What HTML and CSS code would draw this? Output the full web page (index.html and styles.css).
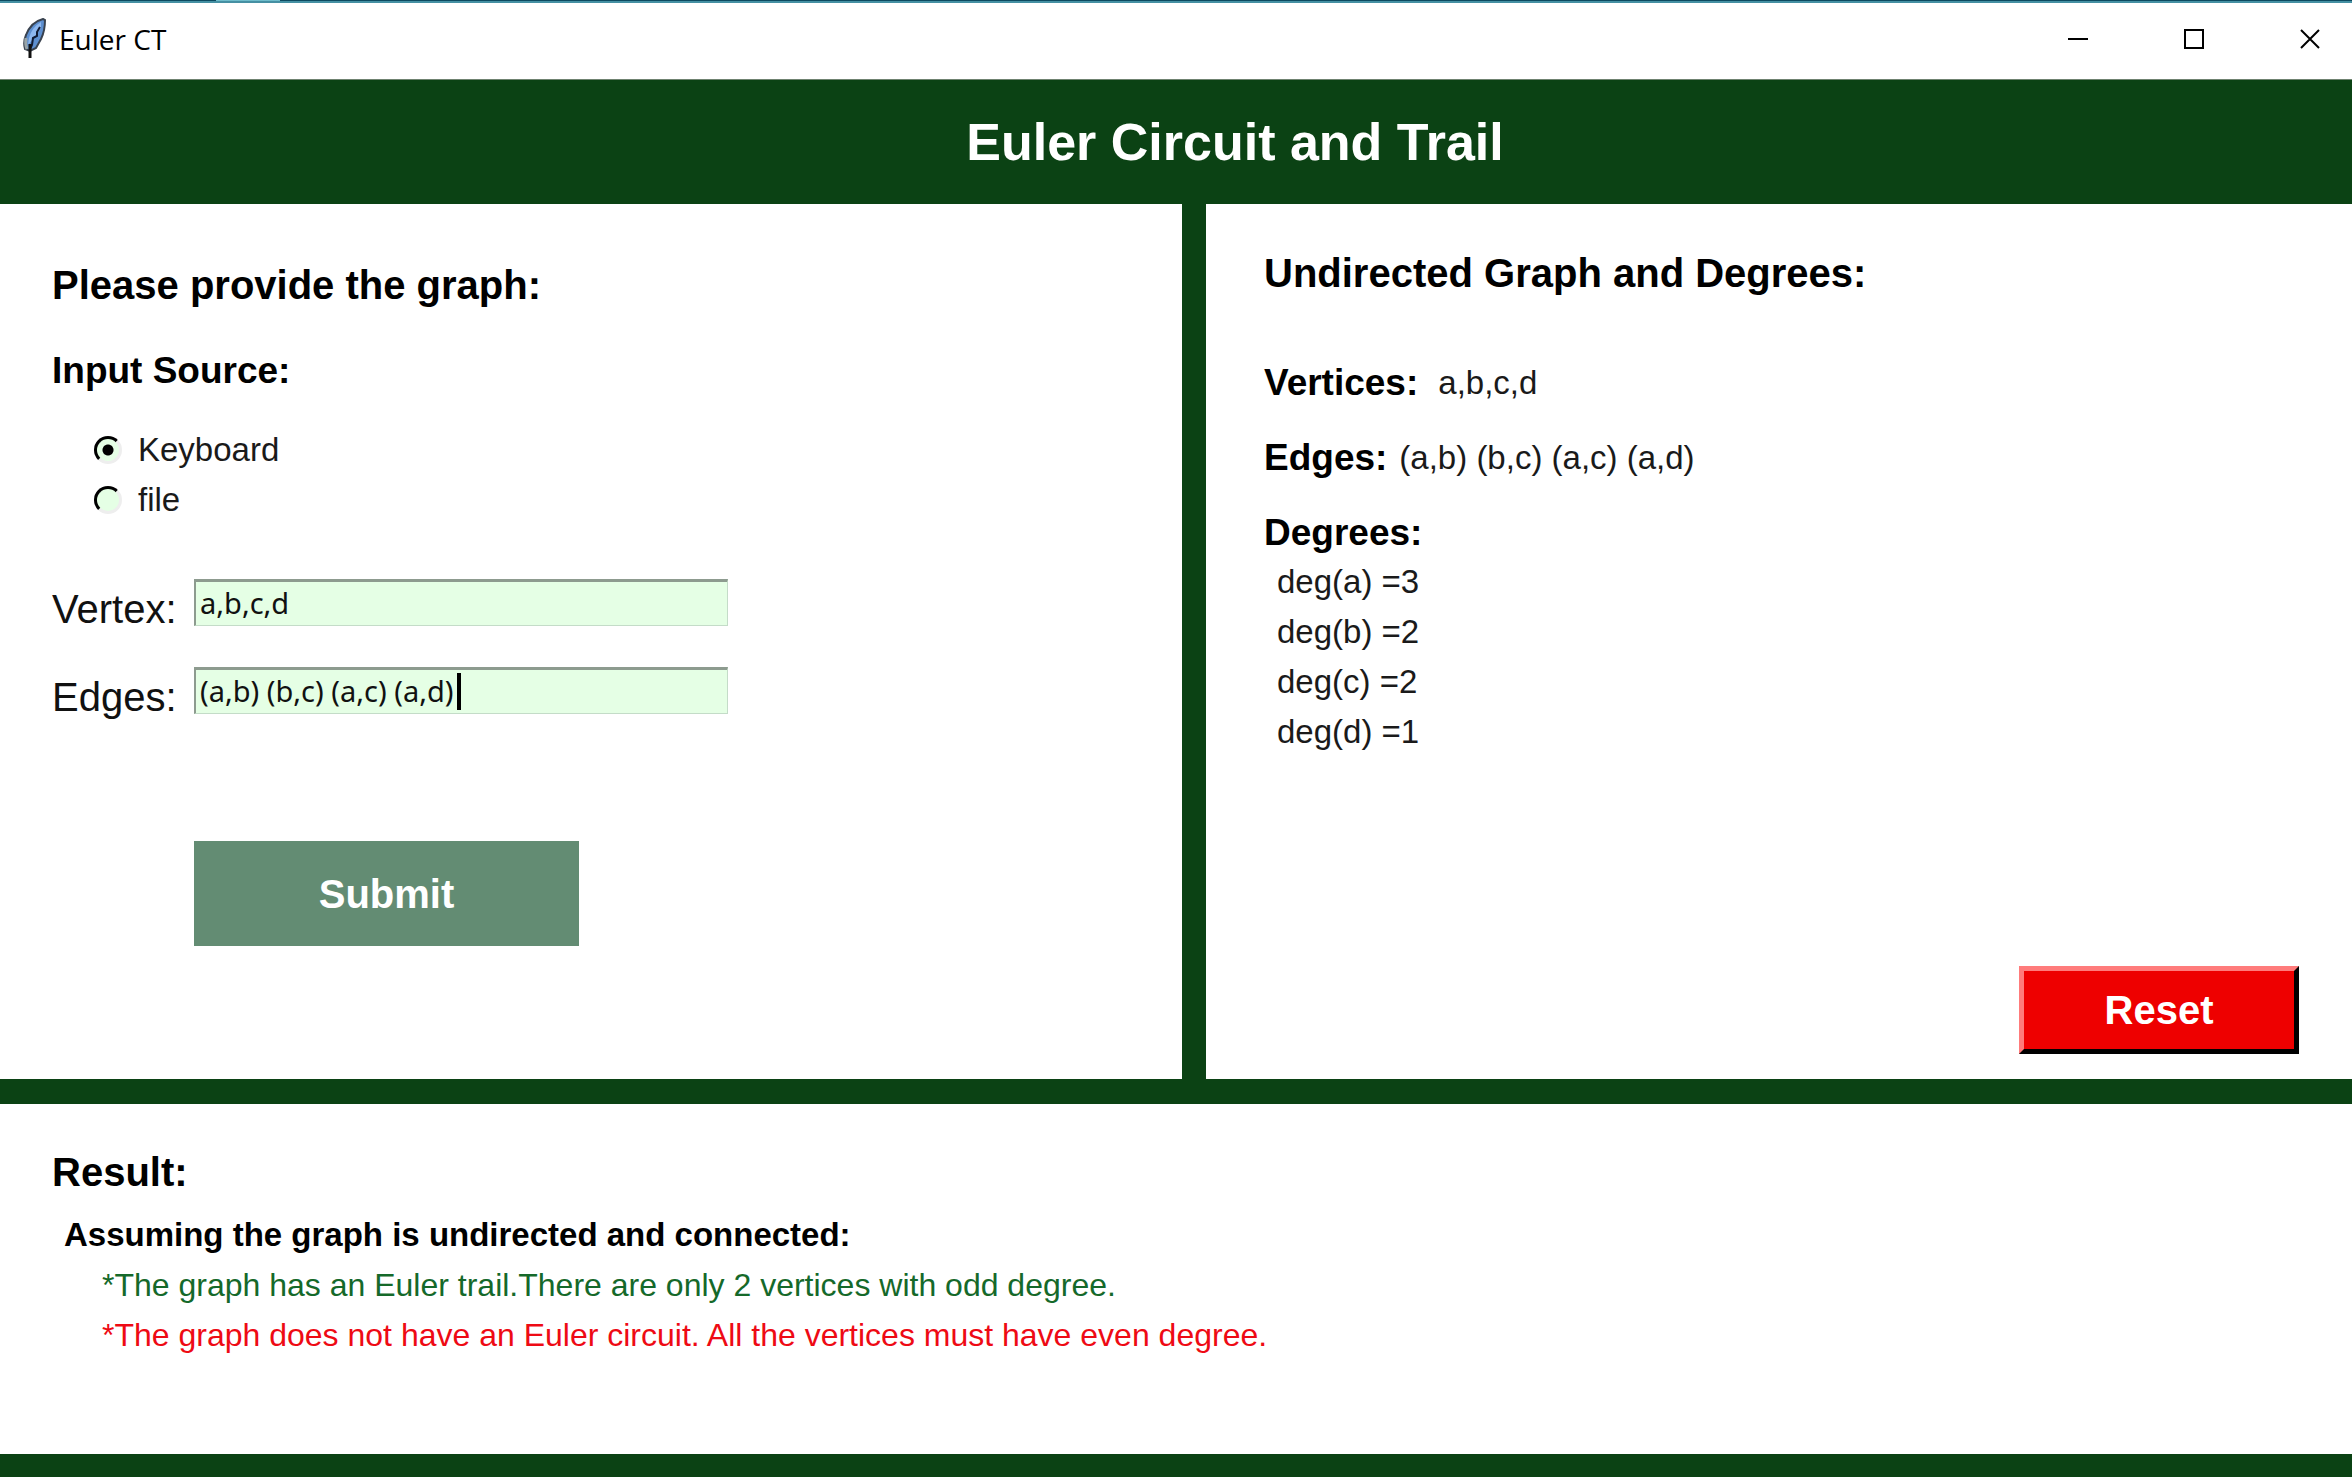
FILE: index.html
```html
<!DOCTYPE html>
<html lang="en">
<head>
<meta charset="utf-8">
<title>Euler CT</title>
<link rel="stylesheet" href="styles.css">
</head>
<body>
<div class="titlebar">
  <svg class="feather" width="24" height="42" viewBox="0 0 24 42" aria-hidden="true">
    <path d="M20 1 L22 2 Q22 13 18 21 L13 30 L7 33 L2 31 Q0 24 3 17 Q8 4 20 1Z" fill="#5d8fd0" stroke="#39424f" stroke-width="2"/>
    <path d="M18 4 Q9 9 6 20 L5 27 L10 21 L18 10Z" fill="#8db7ee"/>
    <path d="M3 20 Q2 27 4 31" fill="none" stroke="#9aa5a8" stroke-width="3"/>
    <path d="M17 9 L14 14 L14 18 L10 20 L9 27 L7 31" fill="none" stroke="#101a33" stroke-width="2"/>
    <path d="M7 26 V40" stroke="#111" stroke-width="3"/>
  </svg>
  <span class="window-name">Euler CT</span>
  <div class="window-controls">
    <button class="window-button" type="button" aria-label="Minimize"><svg width="20" height="20" viewBox="0 0 20 20"><path d="M0 10H20" stroke="#000" stroke-width="2"/></svg></button>
    <button class="window-button" type="button" aria-label="Maximize"><svg width="20" height="20" viewBox="0 0 20 20"><path d="M1 1H19V19H1Z" fill="none" stroke="#000" stroke-width="2"/></svg></button>
    <button class="window-button" type="button" aria-label="Close"><svg width="20" height="20" viewBox="0 0 20 20"><path d="M1 1L19 19M19 1L1 19" stroke="#000" stroke-width="2"/></svg></button>
  </div>
</div>
<header class="banner"><h1>Euler Circuit and Trail</h1></header>
<main class="content">
  <form class="panel input-panel">
    <h2>Please provide the graph:</h2>
    <fieldset class="source">
      <legend>Input Source:</legend>
      <label class="choice"><input type="radio" name="source" checked>Keyboard</label>
      <label class="choice"><input type="radio" name="source">file</label>
    </fieldset>
    <div class="fields">
      <div class="field">
        <label for="vertex">Vertex:</label>
        <div class="entry"><input id="vertex" type="text" value="a,b,c,d"></div>
      </div>
      <div class="field">
        <label for="edges">Edges:</label>
        <div class="entry"><input id="edges" type="text" value="(a,b) (b,c) (a,c) (a,d)"><span class="caret"></span></div>
      </div>
    </div>
    <button class="submit" type="button">Submit</button>
  </form>
  <section class="panel graph-panel">
    <h2>Undirected Graph and Degrees:</h2>
    <dl class="facts">
      <div class="fact vertices"><dt>Vertices:</dt><dd>a,b,c,d</dd></div>
      <div class="fact"><dt>Edges:</dt><dd>(a,b) (b,c) (a,c) (a,d)</dd></div>
    </dl>
    <h3>Degrees:</h3>
    <ul class="degrees">
      <li>deg(a) =3</li>
      <li>deg(b) =2</li>
      <li>deg(c) =2</li>
      <li>deg(d) =1</li>
    </ul>
    <button class="reset" type="button">Reset</button>
  </section>
  <section class="panel result-panel">
    <h2>Result:</h2>
    <p class="assumption">Assuming the graph is undirected and connected:</p>
    <p class="finding yes">*The graph has an Euler trail.There are only 2 vertices with odd degree.</p>
    <p class="finding no">*The graph does not have an Euler circuit. All the vertices must have even degree.</p>
  </section>
</main>
</body>
</html>
```
FILE: styles.css
```css
* { box-sizing: border-box; }

body {
  margin: 0;
  min-height: 100vh;
  display: flex;
  flex-direction: column;
  background: #0b4214;
  color: #000;
  font-family: "Liberation Sans", Arial, sans-serif;
}

h1, h2, h3, p, ul, dl, dd { margin: 0; }
button, input { font-family: inherit; }

.titlebar {
  display: flex;
  align-items: center;
  height: 80px;
  padding: 3px 0 4px 23px;
  background:
    linear-gradient(90deg, transparent 216px, #6fbccb 216px 280px, transparent 280px) top / 100% 1px no-repeat,
    linear-gradient(#0c4a60 1px, #4590a3 1px) top / 100% 3px no-repeat,
    #fff;
  border-bottom: 1px solid #6f8270;
}
.feather { margin-right: 12px; }
.window-name {
  font: 28px/40px "Open Sans", "Noto Sans", sans-serif;
}
.window-controls {
  display: flex;
  margin-left: auto;
}
.window-button {
  display: flex;
  align-items: center;
  justify-content: center;
  width: 116px;
  height: 72px;
  padding: 0 0 0 32px;
  border: 0;
  background: none;
}

.banner {
  padding-left: 118px;
  color: #fff;
  text-align: center;
}
h1 {
  font-size: 52px;
  line-height: 124px;
}

.content {
  flex: 1;
  display: grid;
  grid-template-columns: 591fr 573fr;
  grid-template-rows: auto 1fr;
  gap: 25px 24px;
  padding-bottom: 23px;
}
.panel {
  display: flex;
  flex-direction: column;
  align-items: flex-start;
  background: #fff;
}
h2 {
  font-size: 40px;
  line-height: 48px;
}
h3, dt, legend {
  font-size: 37px;
  line-height: 48px;
  font-weight: bold;
}

.input-panel { padding: 57px 52px 133px; }
.source {
  margin: 38px 0 0;
  padding: 0;
  border: 0;
}
legend {
  margin-bottom: 30px;
  padding: 0;
}
.choice {
  display: flex;
  align-items: center;
  gap: 16px;
  padding-left: 42px;
  font-size: 33px;
  line-height: 50px;
  color: #1a1a1a;
}
.choice input {
  appearance: none;
  width: 28px;
  height: 28px;
  margin: 0;
  border: 3px solid #000;
  border-right-color: #eee;
  border-bottom-color: #eee;
  border-radius: 50%;
  background: #e5ffe5;
}
.choice input:checked {
  background: radial-gradient(circle, #000 5px, #e5ffe5 6px);
}

.fields {
  display: grid;
  gap: 34px;
  margin-top: 54px;
}
.field {
  display: flex;
  align-items: flex-start;
}
.field label {
  width: 142px;
  padding-top: 6px;
  font-size: 40px;
  line-height: 48px;
  color: #111;
}
.entry { position: relative; }
.entry input {
  display: block;
  width: 534px;
  height: 47px;
  padding: 0 4px 3px;
  border: 1px solid #c4dcc8;
  border-top: 3px solid #8d9b8f;
  border-left: 2px solid #8d9b8f;
  background: #e5ffe5;
  color: #111;
  font-family: "Noto Sans", "Open Sans", sans-serif;
  font-size: 29px;
}
.caret {
  position: absolute;
  top: 6px;
  left: 263px;
  width: 4px;
  height: 37px;
  background: #000;
}
.submit, .reset {
  color: #fff;
  font-size: 40px;
  font-weight: bold;
  line-height: 48px;
}
.submit {
  width: 385px;
  height: 105px;
  margin: 120px 0 0 142px;
  padding: 0;
  border: 0;
  background: #638c73;
}

.graph-panel { padding: 45px 53px 25px 58px; }
.facts {
  display: grid;
  gap: 27px;
  margin: 62px 0 27px;
}
.fact {
  display: flex;
  align-items: center;
  gap: 12px;
}
.vertices { gap: 20px; }
dd, .degrees {
  font-size: 33px;
  color: #1a1a1a;
}
dd { line-height: 48px; }
.degrees {
  padding-left: 13px;
  list-style: none;
  line-height: 50px;
}
.reset {
  align-self: flex-end;
  width: 280px;
  height: 88px;
  margin-top: auto;
  padding: 0;
  border: 5px solid;
  border-color: #ff7b7b #000 #000 #ff7b7b;
  background: #ee0000;
}

.result-panel {
  grid-column: 1 / -1;
  padding: 44px 52px;
}
.assumption {
  margin-top: 14px;
  padding-left: 12px;
  font-size: 33px;
  font-weight: bold;
  line-height: 50px;
}
.finding {
  padding-left: 50px;
  font-size: 32px;
  line-height: 50px;
}
.yes { color: #15692a; }
.no { color: #ee0a14; }
```
